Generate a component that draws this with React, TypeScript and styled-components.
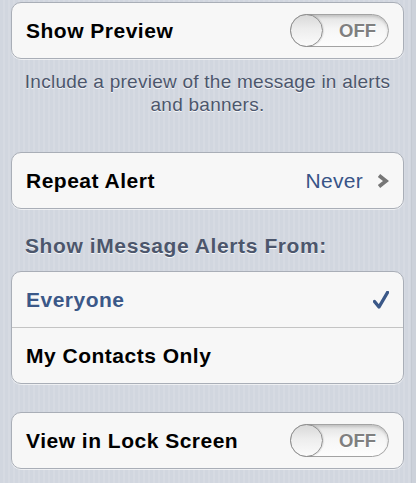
import * as React from "react";
import styled, { createGlobalStyle } from "styled-components";

interface IToggleProps {
  isOn: boolean;
}
interface IStyledRowProps {
  readonly $divider?: boolean;
}
interface IStyledLabelProps {
  readonly $selected?: boolean;
}

const Toggle: React.FunctionComponent<IToggleProps> = ({ isOn }) => {
  return (
    <Track>
      <Knob />
      <ToggleText>{isOn ? "ON" : "OFF"}</ToggleText>
    </Track>
  );
};

const Chevron = () => (
  <svg width="12" height="14" viewBox="0 0 12 14">
    <path
      d="M2 1.5 L9 7 L2 12.5"
      fill="none"
      stroke="#777"
      strokeWidth="3.8"
      strokeLinejoin="miter"
    />
  </svg>
);

const Check = () => (
  <svg width="16" height="18" viewBox="0 0 16 18">
    <path
      d="M1.5 10.5 L6 16 L14.5 1.5"
      fill="none"
      stroke="#3b5888"
      strokeWidth="3.4"
      strokeLinecap="round"
      strokeLinejoin="round"
    />
  </svg>
);

const App: React.FunctionComponent = () => {
  //***********Render UI*****************
  return (
    <>
      <GlobalStyle />
      <Page>
        <Content>
          <Group>
            <Row>
              <Label>Show Preview</Label>
              <Toggle isOn={false} />
            </Row>
          </Group>
          <Footer>
            Include a preview of the message in alerts
            <br />
            and banners.
          </Footer>

          <Group $gap={36}>
            <Row>
              <Label>Repeat Alert</Label>
              <Detail>
                <DetailValue>Never</DetailValue>
                <Chevron />
              </Detail>
            </Row>
          </Group>

          <Header>Show iMessage Alerts From:</Header>
          <Group>
            <Row>
              <Label $selected>Everyone</Label>
              <Check />
            </Row>
            <Row $divider>
              <Label>My Contacts Only</Label>
            </Row>
          </Group>

          <Group $gap={28}>
            <Row>
              <Label>View in Lock Screen</Label>
              <Toggle isOn={false} />
            </Row>
          </Group>
        </Content>
        <Edge />
      </Page>
    </>
  );
};

const GlobalStyle = createGlobalStyle`
  body {
    margin: 0;
    font-family: "Liberation Sans", Arial, Helvetica, sans-serif;
    background: #d3d8e0;
  }
`;
const Page = styled.div`
  display: flex;
  width: 416px;
  height: 483px;
  overflow: hidden;
  background: repeating-linear-gradient(
    90deg,
    #d1d6df 0px,
    #d1d6df 3px,
    #d6dae2 3px,
    #d6dae2 5px
  );
`;
const Content = styled.div`
  width: 411px;
  box-sizing: border-box;
  padding: 2px 7px 0 11px;
  display: flex;
  flex-direction: column;
`;
const Edge = styled.div`
  flex: 1;
  background: #ccd1da;
  border-left: 1px solid #c4c9d2;
`;
const Group = styled.div<{ $gap?: number }>`
  margin-top: ${({ $gap }) => ($gap ? `${$gap}px` : "0")};
  background: #f7f7f7;
  border: 1px solid #a9aeb7;
  border-radius: 10px;
  box-shadow: 0 1px 0 rgba(255, 255, 255, 0.6);
  overflow: hidden;
`;
const Row = styled.div<IStyledRowProps>`
  display: flex;
  align-items: center;
  justify-content: space-between;
  height: 55px;
  padding: 0 14px;
  border-top: ${({ $divider }) => ($divider ? "1px solid #c4c4c4" : "none")};
`;
const Label = styled.div<IStyledLabelProps>`
  font-size: 21px;
  font-weight: bold;
  letter-spacing: 0.5px;
  color: ${({ $selected }) => ($selected ? "#3b5888" : "#000")};
`;
const Detail = styled.div`
  display: flex;
  align-items: center;
  gap: 14px;
`;
const DetailValue = styled.span`
  font-size: 21px;
  letter-spacing: 0.3px;
  color: #385487;
`;
const Footer = styled.div`
  margin-top: 11px;
  font-size: 19px;
  line-height: 23px;
  letter-spacing: 0.25px;
  text-align: center;
  color: #4c566c;
  text-shadow: 0 1px 0 rgba(255, 255, 255, 0.8);
`;
const Header = styled.div`
  margin: 24px 0 13px 14px;
  font-size: 21px;
  line-height: 25px;
  font-weight: bold;
  letter-spacing: 0.6px;
  color: #4c566c;
  text-shadow: 0 1px 0 rgba(255, 255, 255, 0.8);
`;
const Track = styled.div`
  display: flex;
  align-items: center;
  width: 99px;
  height: 33px;
  box-sizing: border-box;
  border: 1px solid #a3a3a3;
  border-radius: 17px;
  background: linear-gradient(#e2e2e2 0%, #f6f6f6 45%, #fdfdfd 100%);
  box-shadow: inset 0 2px 3px rgba(0, 0, 0, 0.15);
`;
const Knob = styled.div`
  width: 33px;
  height: 33px;
  margin-left: -1px;
  box-sizing: border-box;
  border-radius: 50%;
  border: 1px solid #8e8e8e;
  background: linear-gradient(#d9d9d9 0%, #ededed 45%, #fbfbfb 100%);
  box-shadow: 1px 0 1px rgba(0, 0, 0, 0.1);
`;
const ToggleText = styled.span`
  flex: 1;
  text-align: center;
  padding-left: 4px;
  font-size: 18.5px;
  font-weight: bold;
  color: #7f7f7f;
  text-shadow: 0 1px 0 #fff;
`;

export default App;
